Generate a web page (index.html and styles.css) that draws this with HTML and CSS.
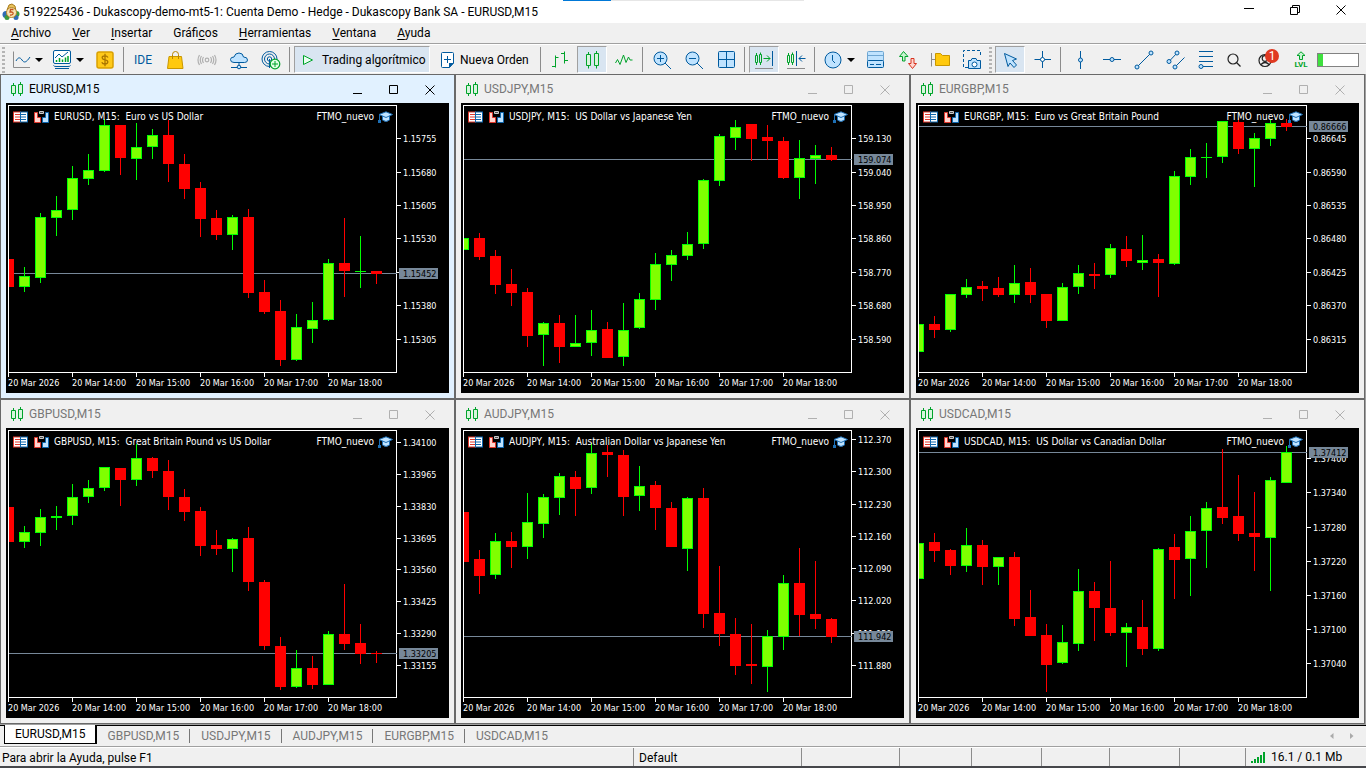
FILE: index.html
```html
<!DOCTYPE html>
<html lang="es">
<head>
<meta charset="utf-8">
<title>519225436 - Dukascopy-demo-mt5-1: Cuenta Demo - Hedge - Dukascopy Bank SA - EURUSD,M15</title>
<link rel="stylesheet" href="styles.css">
</head>
<body>
<div class="app">
  <header class="titlebar">
    <div class="load-strip"></div>
    <svg class="app-logo" width="18" height="18" viewBox="0 0 18 18">
      <path d="M5 7 L7 2 L10 1 L13 3 L14 8Z" fill="#e8c15a" stroke="#a87a1c"/>
      <circle cx="4" cy="11.500" r="3.500" fill="#2f6db5"/>
      <circle cx="14.500" cy="11" r="3" fill="#3c9a3e"/>
      <circle cx="5" cy="14.500" r="2.500" fill="#3c9a3e"/>
      <circle cx="14" cy="14.500" r="2.500" fill="#2f6db5"/>
      <circle cx="9.500" cy="9.500" r="5" fill="#f6e3b4" stroke="#b5882a"/>
      <path d="M11.500 6.500 H8.500 L8 9 H10 Q11.500 9.500 11 11 Q10 12.500 8 12" fill="none" stroke="#c4541c" stroke-width="1.300"/>
    </svg>
    <h1 class="app-title">519225436 - Dukascopy-demo-mt5-1: Cuenta Demo - Hedge - Dukascopy Bank SA - EURUSD,M15</h1>
    <div class="app-controls">
      <button aria-label="Minimizar"><svg width="12" height="12"><path d="M1 4.500H11"/></svg></button>
      <button aria-label="Restaurar"><svg width="12" height="12"><path d="M1.500 3.500h7v7h-7zM3.500 3.500v-2h7v7h-2"/></svg></button>
      <button aria-label="Cerrar"><svg width="12" height="12"><path d="M1.500 1.500l9 9M10.500 1.500l-9 9"/></svg></button>
    </div>
  </header>

  <nav class="menu">
    <a href="#"><u>A</u>rchivo</a>
    <a href="#"><u>V</u>er</a>
    <a href="#"><u>I</u>nsertar</a>
    <a href="#">Gráfi<u>c</u>os</a>
    <a href="#"><u>H</u>erramientas</a>
    <a href="#"><u>V</u>entana</a>
    <a href="#"><u>A</u>yuda</a>
  </nav>

  <div class="toolbar">
    <span class="grip"></span>
    <button class="tool first" aria-label="Tipo de gráfico">
      <svg width="20" height="20"><path class="gray" d="M2.500 1.500V17.500H19"/><path class="b" d="M5 11 C7 7 9 7 11 10 S15 13 19 7"/></svg><i class="caret"></i>
    </button>
    <button class="tool drop" aria-label="Indicadores">
      <svg width="20" height="20"><rect class="bw" x="1.500" y=".5" width="17" height="13" rx="1.500"/><path class="b" d="M3 8 L7 4 L10 7 L16 2"/><path class="g" stroke-width="1.500" d="M4.500 12V10M7.500 12V8M10.500 12V9.500M13.500 12V7.500M16 12V6"/><path class="b" d="M1.500 15.500Q2 16.500 4 16.500H16Q18 16.500 18.500 15.500M3 18.500H17"/></svg><i class="caret"></i>
    </button>
    <button class="tool" aria-label="Símbolos">
      <svg width="20" height="20"><rect x="2" y="2" width="16" height="16" rx="2" fill="#ffc919" stroke="#d9a000" stroke-width="1.500"/><path d="M13 7.500 Q12 5.800 10 5.800 Q7 6 7.200 7.800 Q7.500 9.500 10 9.900 Q13 10.400 12.800 12.200 Q12.500 14 10 14 Q7.500 14 6.800 12.200M10 3.800V16.200" fill="none" stroke="#a97400" stroke-width="1.300"/></svg>
    </button>
    <span class="sep"></span>
    <button class="tool ide">IDE</button>
    <button class="tool" aria-label="Mercado">
      <svg width="20" height="20"><path d="M4 6.500H16.500L18 18.500H2.500Z" fill="#ffc90e" stroke="#c99700"/><path d="M7.500 9V4.500Q7.500 1.500 10.500 1.500T13.500 4.500V9" fill="none" stroke="#b88600"/></svg>
    </button>
    <button class="tool" aria-label="Señales">
      <svg width="20" height="20" fill="none" stroke="#b0b0b0" stroke-width="1.200"><circle cx="10" cy="10" r="1.800"/><path d="M6.500 7Q4.500 10 6.500 13M4.500 6Q2 10 4.500 14M2.500 5Q-.5 10 2.500 15M13.500 7Q15.500 10 13.500 13M15.500 6Q18 10 15.500 14M17.500 5Q20.500 10 17.500 15"/></svg>
    </button>
    <button class="tool" aria-label="VPS">
      <svg width="20" height="20"><path class="bf" d="M5 12.500Q1.500 12.500 1.500 9.500Q1.500 7 5 7Q6 3 10 3Q14 3 14.500 7Q18.500 7 18.500 10Q18.500 12.500 15.500 12.500Z"/><path class="b" d="M10 13v3M2 17.500H8M12 17.500H18"/><circle class="bf" cx="10" cy="17" r="1.800"/></svg>
    </button>
    <button class="tool" aria-label="Copiar señales">
      <svg width="20" height="20"><g class="b"><circle cx="8.500" cy="9" r="7.500"/><circle cx="8.500" cy="9" r="5"/><circle cx="8.500" cy="9" r="2.200"/><path d="M8.500 9V18"/></g><circle cx="14" cy="14" r="4.800" fill="#e2ffe6" stroke="#00a32a" stroke-width="1.200"/><path class="g" d="M14 11V17M11 14H17"/></svg>
    </button>
    <span class="sep"></span>
    <button class="tool algo on"><svg width="14" height="14"><path class="g" fill="#e9fff0" d="M2.500 2.500L11.500 7L2.500 11.500Z"/></svg>Trading algorítmico</button>
    <button class="tool order"><svg width="14" height="18"><path class="bw" d="M2.500 1.500H12.500Q13.500 1.500 13.500 2.500V12L9.500 16.500H2.500Q1.500 16.500 1.500 15.500V2.500Q1.500 1.500 2.500 1.500Z"/><path d="M9 17V12H14Z" fill="#005a9e"/><path class="b" d="M7.500 5V12M4 8.500H11"/></svg>Nueva Orden</button>
    <span class="sep"></span>
    <button class="tool" aria-label="Gráfico de barras"><svg width="20" height="20"><path class="g" d="M5.500 5.500V17.500M2 16.500H5.500M5.500 7.500H8.500M14.500 1.500V13.500M11 3.500H14.500M14.500 10.500H18"/></svg></button>
    <button class="tool on" aria-label="Gráfico de velas"><svg width="20" height="20"><path class="g" fill="#d7f5dd" d="M4.500 4.500h4v11h-4zM12.500 3.500h4v12h-4z"/><path class="g" d="M6.500 2v2M6.500 16v2.500M14.500 1v2M14.500 16v2.500"/></svg></button>
    <button class="tool" aria-label="Gráfico de líneas"><svg width="20" height="20"><path class="g" d="M1.500 13L3.500 9.500L6 14.500L9.500 5L12 12.500L14.500 7L16 10H18.500"/></svg></button>
    <span class="sep"></span>
    <button class="tool" aria-label="Acercar"><svg width="20" height="20"><path class="b" d="M13 13L19 19"/><circle class="bf" cx="8.500" cy="8.500" r="6.500"/><path class="b" d="M8.500 5V12M5 8.500H12"/></svg></button>
    <button class="tool" aria-label="Alejar"><svg width="20" height="20"><path class="b" d="M13 13L19 19"/><circle class="bf" cx="8.500" cy="8.500" r="6.500"/><path class="b" d="M5 8.500H12"/></svg></button>
    <button class="tool" aria-label="Mosaico"><svg width="20" height="20"><rect class="bf" x="2.500" y="1.500" width="16" height="16" rx="1"/><path class="b" d="M10.500 1.500V17.500M2.500 9.500H18.500"/></svg></button>
    <span class="sep"></span>
    <button class="tool on" aria-label="Desplazar al final"><svg width="20" height="20"><path class="g" d="M1.500 5.500h2v7h-2zM5.500 4.500h2v8h-2zM2.500 3v2M2.500 13v2M6.500 2.500v2M6.500 13v2M9.500 8.500H16M13 5.500L16 8.500L13 11.500"/><path class="b" d="M18.500 1V16"/><path class="gray" d="M1 18.500H19"/></svg></button>
    <button class="tool" aria-label="Margen del gráfico"><svg width="20" height="20"><path class="g" d="M1.500 5.500h2v7h-2zM5.500 4.500h2v8h-2zM2.500 3v2M2.500 13v2M6.500 2.500v2M6.500 13v2"/><path class="b" d="M10.500 1V16M13 8.500H19.500M16 5.500L13 8.500L16 11.500"/><path class="gray" d="M1 18.500H19"/></svg></button>
    <span class="sep"></span>
    <button class="tool drop" aria-label="Periodos"><svg width="20" height="20"><circle class="bf" cx="10" cy="10" r="8"/><path class="b" d="M9.500 5V10.500L12 13"/></svg><i class="caret"></i></button>
    <button class="tool" aria-label="Plantillas"><svg width="20" height="20"><path d="M2.500 1.500H16.500Q17.500 1.500 17.500 2.500V10.500H1.500V2.500Q1.500 1.500 2.500 1.500Z" fill="#bfe3ff" stroke="#6ea6d2"/><path d="M1.500 5.500H17.500" stroke="#6ea6d2"/><rect class="bf" x="1.500" y="10.500" width="16" height="7" rx="1"/><path class="b" d="M4 14.500H8M10 14.500H15"/></svg></button>
    <button class="tool" aria-label="Comprar y vender"><svg width="20" height="20"><path class="g" fill="#c9f3d2" d="M5.500 1.500L10 6.500H7V11H4.500V6.500H1.500Z"/><path d="M14.500 18.500L10.500 13.500H13V8.500H16V13.500H18.500Z" fill="#ffd5cf" stroke="#d8321f"/></svg></button>
    <button class="tool" aria-label="Archivos"><svg width="20" height="20"><path class="gray" d="M1.500 3V16.500M1.500 9.500H5"/><path d="M5.500 3.500H10.500L12.500 5.500H19.500V15.500H5.500Z" fill="#ffc90e" stroke="#c99700"/></svg></button>
    <button class="tool" aria-label="Captura"><svg width="20" height="20"><path class="b" stroke-dasharray="3 2" d="M6 17.500H1.500V.5H18.500V7"/><path class="bf" d="M6.500 10.500H9L10 8.500H14L15 10.500H18.500V18.500H6.500Z"/><circle class="bw" cx="12.500" cy="14.500" r="2.500"/></svg></button>
    <span class="grip inner"></span>
    <button class="tool on" aria-label="Cursor"><svg width="20" height="20"><path class="bf" d="M4.500 3.500L16.500 9L12.500 10.500L16.500 15L14 17.500L10 13L8 16.500Z"/></svg></button>
    <button class="tool" aria-label="Cruz"><svg width="20" height="20"><path class="b" d="M10.500 1V18M2.500 9.500H19"/><circle class="bw" cx="10.500" cy="9.500" r="2"/></svg></button>
    <span class="sep"></span>
    <button class="tool" aria-label="Línea vertical"><svg width="20" height="20"><path class="b" d="M10.500 1V19"/><circle class="bf" cx="10.500" cy="10" r="2"/></svg></button>
    <button class="tool" aria-label="Línea horizontal"><svg width="20" height="20"><path class="b" d="M1 9.500H19"/><circle class="bf" cx="10" cy="9.500" r="2"/></svg></button>
    <button class="tool" aria-label="Línea de tendencia"><svg width="20" height="20"><path class="b" d="M3 17L17 3"/><circle class="bf" cx="3" cy="17" r="2"/><circle class="bf" cx="17" cy="3" r="2"/></svg></button>
    <button class="tool" aria-label="Canal"><svg width="20" height="20"><path class="b" d="M3 11.500L11 3M9 17L18.500 7.500"/><circle class="bf" cx="3" cy="11.500" r="2"/><circle class="bf" cx="11" cy="3" r="2"/><circle class="bf" cx="9" cy="17" r="2"/></svg></button>
    <button class="tool narrow" aria-label="Fibonacci"><svg width="16" height="20"><path class="b" d="M1 1.500H15M1 6.500H15M1 11.500H15M3 16.500H15"/><circle class="bf" cx="3" cy="16.500" r="2"/></svg></button>
    <button class="tool narrow" aria-label="Buscar"><svg width="16" height="16" fill="none" stroke="#222" stroke-width="1.200"><circle cx="7" cy="7" r="5"/><path d="M10.500 10.500L14.500 14.500"/></svg></button>
    <button class="tool account" aria-label="Cuenta, 1 aviso"><svg width="18" height="18" fill="none" stroke="#222" stroke-width="1.200"><circle cx="7" cy="9.500" r="6"/><circle cx="7" cy="7.500" r="2.800"/><path d="M3 13.500Q7 9.500 11 13.500"/></svg><span class="badge">1</span></button>
    <div class="level"><svg width="12" height="10"><path class="g" fill="#c9f3d2" d="M6 .8L10 4.500H7.500V8.500H4.500V4.500H2Z"/></svg><span>LVL</span></div>
    <div class="gauge"><span></span></div>
  </div>

  <main class="charts" id="charts"></main>

  <div class="tabs">
    <a class="tab current" href="#">EURUSD,M15</a>
    <a class="tab" href="#">GBPUSD,M15</a>
    <a class="tab" href="#">USDJPY,M15</a>
    <a class="tab" href="#">AUDJPY,M15</a>
    <a class="tab" href="#">EURGBP,M15</a>
    <a class="tab" href="#">USDCAD,M15</a>
    <div class="tab-arrows">
      <button aria-label="Anterior"><svg width="8" height="8"><path d="M5.500 1L2 4L5.500 7Z"/></svg></button>
      <button aria-label="Siguiente"><svg width="8" height="8"><path d="M2 1L5.500 4L2 7Z"/></svg></button>
    </div>
  </div>

  <footer class="status">
    <span class="help">Para abrir la Ayuda, pulse F1</span>
    <span class="profile">Default</span>
    <span class="c98"></span><span class="c72"></span><span class="c70"></span><span class="c68"></span><span class="c70"></span><span class="c66"></span>
    <span class="net"><svg width="16" height="12" fill="#00a32a"><path d="M0 10h2v2H0zM3 8h2v4H3zM6 6h2v6H6zM9 4h2v8H9zM12 1h2v11h-2z"/></svg>16.1 / 0.1 Mb</span>
  </footer>
  <div class="edge"></div>
</div>
<script src="charts.js"></script>
</body>
</html>
```
FILE: styles.css
```css
* { box-sizing: border-box; }
body {
  margin: 0;
  font: 12px/16px Roboto, "Open Sans", sans-serif;
  color: #000;
  background: #f0f0f0;
}
button {
  margin: 0;
  padding: 0;
  border: 0;
  background: none;
  font: inherit;
  color: inherit;
}
a { color: inherit; text-decoration: none; }
svg { display: block; flex: none; }
.app { display: flex; flex-direction: column; height: 100vh; min-height: 600px; overflow: hidden; }

.titlebar { position: relative; display: flex; align-items: center; height: 23px; flex: none; padding-left: 2px; background: #fff; }
.load-strip { position: absolute; top: 0; left: 563px; width: 241px; height: 1px; background: linear-gradient(90deg, #0078d7 48px, #e6e6e6 48px); }
.app-title { margin: 0 0 0 3px; flex: 1; font-size: 12px; font-weight: 400; white-space: nowrap; }
.app-controls { display: flex; padding-right: 2px; }
.app-controls button { width: 46px; height: 20px; display: grid; place-items: center; padding-bottom: 4px; }
.app-controls path { fill: none; stroke: #000; }

.menu { display: flex; align-items: center; gap: 21px; height: 21px; flex: none; padding-left: 11px; border-bottom: 1px solid #a0a0a0; }
.menu u { text-underline-offset: 2px; }

.toolbar { display: flex; align-items: center; gap: 2px; height: 30px; flex: none; padding-left: 2px; border-top: 1px solid #fff; }
.tool { display: flex; align-items: center; justify-content: center; flex: none; width: 30px; height: 27px; border: 1px solid transparent; white-space: nowrap; }
.tool.on { background: #d9e5f1; border-color: #a0a0a0 #fff #fff #a0a0a0; }
.tool.first { width: 38px; margin-left: 1px; gap: 4px; }
.tool.drop { width: 40px; gap: 4px; }
.tool.algo { width: 136px; gap: 7px; justify-content: flex-start; padding-left: 6px; }
.tool.order { width: 105px; gap: 6px; justify-content: flex-start; padding-left: 7px; }
.tool.ide { color: #005a9e; }
.tool.narrow { width: 26px; }
.tool.account { position: relative; width: 36px; }
.badge { position: absolute; top: 2px; left: 15px; width: 14px; height: 14px; border-radius: 7px; background: #e03a22; color: #fff; font-size: 12px; line-height: 14px; text-align: center; }
.caret { border: 4px solid transparent; border-top-color: #000; border-bottom: 0; }
.grip { width: 3px; height: 26px; background: repeating-linear-gradient(#b4b4b4 0 2px, transparent 2px 4px); }
.grip.inner { margin-right: 1px; }
.sep { width: 1px; height: 25px; margin: 0 2px 0 1px; background: #8c8c8c; }
.b { fill: none; stroke: #005a9e; }
.bf { fill: #bfe3ff; stroke: #005a9e; }
.bw { fill: #fff; stroke: #005a9e; }
.g { stroke: #00a32a; }
.g:not([fill]) { fill: none; }
.gray { fill: none; stroke: #8c8c8c; }
.level { display: flex; flex-direction: column; align-items: center; width: 26px; margin-left: 1px; color: #00a32a; font-size: 8px; line-height: 8px; font-weight: 700; }
.gauge { width: 42px; height: 14px; margin-left: 1px; border: 1px solid #828282; background: #fff; }
.gauge span { display: block; width: 5px; height: 100%; background: #3fe03f; }

.charts { flex: 1; min-height: 0; display: grid; grid-template: 1fr 1fr / repeat(3, 1fr); padding-right: 1px; background: #a0a0a0; }
.win { display: flex; flex-direction: column; min-width: 0; padding: 0 5px 5px; border: 1px solid #696969; background: #f0f0f0; color: #777; }
.win.active { background: #e1f1ff; color: #000; }
.win-head { display: flex; align-items: center; height: 28px; flex: none; padding-left: 4px; }
.win-head h2 { flex: 1; margin: 0 0 0 5px; font-size: 12px; font-weight: 400; }
.win-head button { width: 36px; height: 22px; display: grid; place-items: center; padding-top: 2px; }
.win-head button path { fill: none; stroke: #b0b0b0; }
.win.active .win-head button path { stroke: #000; }
.win-buttons { display: flex; padding-right: 1px; }

.pane { flex: 1; min-height: 0; display: grid; grid-template: 1fr 20px / 1fr 52px; padding: 2px 0 0 2px; background: #000; color: #fff; font: 9px/12px "DejaVu Sans Condensed", "DejaVu Sans", sans-serif; }
.plot { position: relative; min-height: 0; border: 1px solid #fff; }
.plot > svg { position: absolute; top: -1px; left: 0; width: calc(100% + 1px); height: calc(100% + 2px); overflow: hidden; }
.caption { position: relative; display: flex; align-items: center; height: 21px; padding: 0 3px 0 4px; white-space: pre; font-size: 10px; }
.caption .sym { margin-left: 6px; }
.caption .name { flex: 1; margin-left: 5px; }
.caption .cap { margin-left: 4px; }
.prices { position: relative; }
.prices span { position: absolute; left: 0; display: flex; align-items: center; height: 11px; margin-top: -5px; }
.prices span::before { content: ""; width: 4px; height: 1px; margin-right: 2px; background: #fff; }
.prices .last { left: 2px; width: 39px; padding-left: 4px; background: #778899; color: #000; }
.prices .last::before { display: none; }
.times { position: relative; }
.times span { position: absolute; top: 0; padding-top: 4px; white-space: nowrap; }
.times span::before { content: ""; position: absolute; top: 0; left: 0; width: 1px; height: 4px; background: #fff; }

.tabs { display: flex; align-items: stretch; height: 22px; flex: none; padding-left: 4px; border-top: 1px solid #000; border-bottom: 1px solid #a0a0a0; box-shadow: 0 -1px #a0a0a0; margin-top: 1px; color: #777; position: relative; }
.tab { display: flex; align-items: center; height: 14px; margin-top: 3px; padding: 0 10px 0 11px; border-right: 1px solid #777; }
.tab.current { height: 19px; margin-top: -1px; padding: 0 9px 0 10px; border: 1px solid #000; border-top: 0; border-right-width: 2px; background: #fff; color: #000; }
.tab:nth-last-child(2) { border: 0; }
.tab-arrows { display: flex; gap: 12px; margin-left: auto; padding-right: 10px; align-items: center; }
.tab-arrows path { fill: #aaa; }

.status { display: flex; align-items: center; height: 19px; flex: none; border-top: 1px solid #fff; line-height: 20px; }
.status span { height: 18px; padding-left: 5px; border-left: 1px solid #8c8c8c; }
.status .help { flex: 1; padding-left: 2px; border: 0; }
.status .profile { width: 168px; }
.status .c98 { width: 98px; }
.status .c72 { width: 72px; }
.status .c70 { width: 70px; }
.status .c68 { width: 68px; }
.status .c66 { width: 66px; }
.status .net { display: flex; align-items: center; gap: 4px; width: 121px; }
.edge { height: 2px; flex: none; background: #46474b; }
```
FILE: charts.js
```js
// Candles are [up, high, bodyTop, bodyBottom, low] in plot units (389 x 268), 16 units apart.
const WIDTH = 389;
const HEIGHT = 268;
const ROW_A = [33, 67, 100, 133, 167, 200, 234];
const charts = [
  {
    sym: "EURUSD", name: "Euro vs US Dollar", last: "1.15452", line: 168, ticks: ROW_A,
    prices: ["1.15755", "1.15680", "1.15605", "1.15530", "", "1.15380", "1.15305"],
    data: [[0,154,154,182,182],[1,162,171,182,187],[1,108,112,173,178],[1,91,105,113,131],[1,61,73,105,115],[1,49,65,74,80],[1,14,20,66,67],[0,20,20,53,70],[1,18,42,54,75],[1,24,30,42,54],[0,15,30,59,77],[0,49,59,84,94],[0,77,83,114,132],[0,105,113,130,135],[1,110,112,130,145],[0,104,112,188,193],[0,175,187,207,209],[0,195,206,255,261],[1,209,222,255,256],[1,197,215,224,238],[1,154,158,215,216],[0,113,158,166,192],[1,131,166,167,183],[0,166,166,169,179]]
  },
  {
    sym: "USDJPY", name: "US Dollar vs Japanese Yen", last: "159.074", line: 54, ticks: ROW_A,
    prices: ["159.130", "159.040", "158.950", "158.860", "158.770", "158.680", "158.590"],
    data: [[1,133,133,145,145],[0,128,133,152,155],[0,145,151,180,189],[0,164,179,188,201],[0,183,187,231,242],[1,217,218,230,261],[0,210,218,242,258],[1,210,238,242,242],[1,205,225,238,251],[0,217,224,253,253],[1,198,225,252,261],[1,188,194,223,224],[1,148,159,195,205],[1,145,150,160,176],[1,127,139,151,155],[1,74,75,139,144],[1,29,31,76,81],[1,15,22,33,45],[0,19,19,34,56],[0,20,32,36,55],[0,32,36,73,74],[1,35,53,73,94],[1,40,50,54,79],[0,42,50,55,56]]
  },
  {
    sym: "EURGBP", name: "Euro vs Great Britain Pound", last: "0.86666", line: 21, ticks: ROW_A,
    prices: ["0.86645", "0.86590", "0.86535", "0.86480", "0.86425", "0.86370", "0.86315"],
    data: [[1,219,219,247,247],[0,211,219,225,233],[1,189,189,225,227],[1,174,182,190,193],[0,176,181,184,196],[0,172,183,190,192],[1,160,178,190,198],[0,163,177,190,198],[0,189,189,216,223],[1,178,182,216,216],[1,160,168,182,189],[0,158,169,171,184],[1,139,143,170,173],[0,131,144,156,162],[1,130,155,158,165],[0,149,154,158,192],[1,66,71,159,160],[1,44,52,72,80],[1,38,52,53,73],[1,16,16,52,58],[0,13,17,44,49],[1,28,33,44,82],[1,15,18,34,41],[0,14,18,22,26]]
  },
  {
    sym: "GBPUSD", name: "Great Britain Pound vs US Dollar", last: "1.33205", line: 223,
    ticks: [12, 44, 76, 108, 139, 171, 203, 235],
    prices: ["1.34100", "1.33965", "1.33830", "1.33695", "1.33560", "1.33425", "1.33290", "1.33155"],
    data: [[0,77,77,112,112],[1,96,102,112,118],[1,79,87,103,116],[1,76,86,88,100],[1,54,67,86,95],[1,50,58,67,73],[1,37,37,58,61],[0,38,38,50,76],[1,14,28,50,56],[0,27,28,41,48],[0,30,41,67,80],[0,59,67,82,91],[0,77,81,116,126],[0,100,115,119,125],[1,108,109,119,142],[0,97,108,152,161],[0,150,152,216,220],[0,207,216,257,260],[1,220,238,257,258],[0,226,238,255,259],[1,201,204,255,255],[0,154,204,214,220],[0,194,213,224,234],[0,221,223,224,233]]
  },
  {
    sym: "AUDJPY", name: "Australian Dollar vs Japanese Yen", last: "111.942", line: 206,
    ticks: [9, 41, 74, 106, 138, 170, 203, 235],
    prices: ["112.370", "112.300", "112.230", "112.160", "112.090", "112.020", "111.950", "111.880"],
    data: [[0,82,82,132,132],[0,120,129,146,164],[1,103,111,145,149],[0,102,111,117,138],[1,63,92,117,129],[1,64,67,94,108],[1,43,46,68,85],[0,41,47,59,86],[1,13,23,58,64],[0,15,22,25,47],[0,20,25,67,86],[1,36,56,66,81],[0,51,55,78,100],[0,72,78,117,117],[1,67,68,119,141],[0,58,68,184,198],[0,136,183,204,216],[0,188,204,236,245],[0,194,234,236,254],[1,200,206,237,262],[1,145,153,207,220],[0,118,153,185,206],[0,131,184,189,199],[0,188,189,207,213]]
  },
  {
    sym: "USDCAD", name: "US Dollar vs Canadian Dollar", last: "1.37412", line: 22,
    ticks: [28, 62, 97, 131, 165, 199, 233],
    prices: ["1.37400", "1.37340", "1.37280", "1.37220", "1.37160", "1.37100", "1.37040"],
    data: [[1,113,113,149,149],[0,103,112,121,132],[0,119,120,136,145],[1,98,115,136,142],[0,110,115,137,155],[1,127,127,137,155],[0,122,127,189,196],[0,160,187,206,206],[0,194,205,235,262],[1,195,212,233,234],[1,139,161,214,221],[0,152,161,178,211],[0,131,178,203,206],[1,193,197,203,237],[0,170,197,219,225],[1,118,119,219,221],[0,104,117,130,169],[1,86,101,129,166],[1,72,78,101,138],[0,19,77,88,94],[0,45,86,104,111],[0,62,103,107,141],[1,47,50,108,161],[1,16,22,53,53]]
  }
];

const times = ["20 Mar 2026", "20 Mar 14:00", "20 Mar 15:00", "20 Mar 16:00", "20 Mar 17:00", "20 Mar 18:00"];

function rect(x, y, w, h, fill) {
  return `<rect x="${x}" y="${y}" width="${w}" height="${h}" fill="${fill}"/>`;
}

function candle([up, high, top, bottom, low], i) {
  const x = i * 16;
  const edge = up ? "#00ff00" : "#ff0000";
  let out = rect(x, high, 1, low - high, edge) + rect(x - 5, top, 11, bottom - top, edge);
  if (up && bottom - top > 2) out += rect(x - 4, top + 1, 9, bottom - top - 2, "#7fff00");
  return out;
}

const pct = (value, total) => `${value / total * 100}%`;

document.getElementById("charts").innerHTML = charts.map((c, n) => `
  <section class="win${n ? "" : " active"}">
    <div class="win-head">
      <svg width="14" height="16"><path class="g" fill="#d7f5dd" d="M1.500 4.500h4v8h-4zM8.500 3.500h4v9h-4z"/><path class="g" d="M3.500 2v2M3.500 13v2M10.500 1v2M10.500 13v2"/></svg>
      <h2>${c.sym},M15</h2>
      <div class="win-buttons">
        <button aria-label="Minimizar"><svg width="10" height="10"><path d="M0 8.500H9"/></svg></button>
        <button aria-label="Maximizar"><svg width="10" height="10"><path d="M.5 .5h8v8h-8z"/></svg></button>
        <button aria-label="Cerrar"><svg width="10" height="10"><path d="M.5 .5l9 9M9.500 .5l-9 9"/></svg></button>
      </div>
    </div>
    <div class="pane">
      <div class="plot">
        <svg viewBox="1 0 ${WIDTH - 1} ${HEIGHT}" preserveAspectRatio="none" shape-rendering="crispEdges">
          ${rect(0, c.line, WIDTH, 1, "#778899")}${c.data.map(candle).join("")}
        </svg>
        <div class="caption">
          <svg width="15" height="12"><path d="M0 .5h8v11H0z" fill="#e0382c"/><path d="M7 .5h8v11H7z" fill="#0e66ad"/><path d="M1 1.500h6v9H1zM8 1.500h6v9H8z" fill="#fff"/><path d="M2 3.500h5M2 6h5M2 8.500h5" stroke="#e0382c"/><path d="M8 3.500h5M8 6h5M8 8.500h5" stroke="#0e66ad"/></svg>
          <svg class="sym" width="15" height="12"><path d="M.5 1.500h3v5h3v5h-6z" fill="#ffd5cf" stroke="#e0382c"/><path d="M14.500 1.500h-3v5h-3v5h6z" fill="#bfe3ff" stroke="#0e66ad"/><path d="M5.500 .5h4v2h-4z" fill="#555" stroke="#ccc"/></svg>
          <span class="name">${c.sym}, M15:  ${c.name}</span>
          <span>FTMO_nuevo</span>
          <svg class="cap" width="15" height="12"><path d="M4.500 5v4q3.500 3 7 0V5" fill="#bfe3ff" stroke="#1d6fb5"/><path d="M1 3.500L8 .8l6.500 2.700L8 6.500z" fill="#bfe3ff" stroke="#1d6fb5"/><path d="M1.500 4v5" stroke="#1d6fb5"/><path d="M0 9h3v3H0z" fill="#1d6fb5"/></svg>
        </div>
      </div>
      <div class="prices">
        ${c.prices.map((p, i) => `<span style="top:${pct(c.ticks[i], HEIGHT)}">${p}</span>`).join("")}
        <span class="last" style="top:${pct(c.line, HEIGHT)}">${c.last}</span>
      </div>
      <div class="times">
        ${times.map((t, i) => `<span style="left:${pct(i * 64, WIDTH)}">${t}</span>`).join("")}
      </div>
    </div>
  </section>`).join("");
```
